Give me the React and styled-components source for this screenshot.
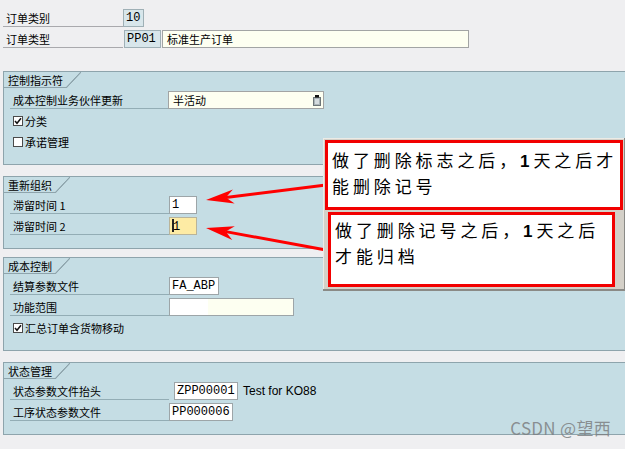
import React from 'react'
import styled, { createGlobalStyle, css } from 'styled-components'

const GlobalStyle = createGlobalStyle`
  html, body {
    margin: 0;
    padding: 0;
    background: #efeff1;
  }
  body {
    font-family: "Noto Sans CJK SC", "Liberation Sans", sans-serif;
    font-size: 11px;
    color: #000;
    overflow: hidden;
  }
`

const Screen = styled.div`
  position: relative;
  width: 625px;
  height: 449px;
  overflow: hidden;
`

const Header = styled.div`
  display: flex;
  flex-direction: column;
  gap: 3px;
  padding: 9px 0 0 3px;
`

const Row = styled.div`
  display: flex;
  align-items: stretch;
  height: 18px;
  gap: ${p => p.$gap || 0}px;
`

const HeadLabel = styled.div`
  width: 120px;
  box-sizing: border-box;
  padding-left: 3px;
  border-bottom: 1px solid #a9a9ad;
  display: flex;
  align-items: center;
`

const tones = {
  ro: css`background: #d8e6eb; border-color: #9fb0b6;`,
  white: css`background: #fff; border-color: #9da5a8;`,
  cream: css`background: #fdfff1; border-color: #a2a4a4;`,
  yellow: css`background: #fdeba4; border-color: #b9b49a;`,
  split: css`background: linear-gradient(to right, #fff 0 38px, #fdfff1 38px); border-color: #9da5a8;`
}

const Field = styled.div`
  box-sizing: border-box;
  width: ${p => p.$w}px;
  height: 18px;
  border: 1px solid;
  ${p => tones[p.$tone || 'white']}
  display: flex;
  align-items: center;
  justify-content: space-between;
  padding: 0 2px 0 ${p => (p.$mono ? 2 : 4)}px;
  white-space: nowrap;
  overflow: hidden;
  ${p => p.$mono && css`
    font-family: "Liberation Mono", monospace;
    font-size: 12px;
  `}
`

const Caret = styled.span`
  display: inline-block;
  width: 2px;
  height: 13px;
  background: #222;
  margin-right: -1px;
  vertical-align: -2px;
`

const Panel = styled.section`
  margin: ${p => p.$top}px 0 0 3px;
  background: #c5dde4;
  border: 1px solid #8ea4ac;
  border-right: none;
  padding-bottom: 13px;
`

const Tab = styled.div`
  display: flex;
  height: 16px;
`

const TabLabel = styled.div`
  box-sizing: border-box;
  height: 16px;
  padding: 0 3px 0 4px;
  border-bottom: 1px solid #8ea4ac;
  display: flex;
  align-items: center;
`

const TabSlant = styled.div`
  width: 15px;
  height: 16px;
  background: linear-gradient(
    to bottom right,
    transparent calc(50% - 0.9px),
    #8ea4ac calc(50% - 0.3px),
    #8ea4ac calc(50% + 0.3px),
    transparent calc(50% + 0.9px)
  );
`

const Body = styled.div`
  display: flex;
  flex-direction: column;
  gap: 3px;
  padding: 3px 0 0 6px;
`

const RowLabel = styled.div`
  width: ${p => p.$w || 159}px;
  box-sizing: border-box;
  padding-left: 3px;
  border-bottom: 1px solid #93adb5;
  display: flex;
  align-items: center;
`

const CheckRow = styled.div`
  display: flex;
  align-items: center;
  gap: 2px;
  height: 18px;
  padding-left: 3px;
`

const Box = styled.span`
  width: 10px;
  height: 10px;
  box-sizing: border-box;
  border: 1px solid #4a4a4a;
  background: #fff;
  display: flex;
  align-items: center;
  justify-content: center;
`

const Aside = styled.span`
  font-family: "Liberation Sans", sans-serif;
  font-size: 12px;
  align-self: center;
`

const Arrows = styled.svg`
  position: absolute;
  left: 0;
  top: 0;
  pointer-events: none;
`

const Callouts = styled.div`
  position: absolute;
  left: 323px;
  top: 138px;
  width: 302px;
  height: 153px;
  box-sizing: border-box;
  padding: 2px 0 0 2px;
  background: #d4d0c8;
  box-shadow: inset -1px -2px #8a8a86, inset 1px 1px #ecebe6;
  display: flex;
  flex-direction: column;
  gap: 2px;
`

const Note = styled.div`
  box-sizing: border-box;
  width: ${p => p.$w}px;
  height: ${p => p.$h}px;
  margin-left: ${p => p.$x}px;
  padding: ${p => p.$pad};
  border: 3px solid #f20000;
  background: #fff;
  font-size: 17px;
  letter-spacing: 3.9px;
  line-height: 24px;
  white-space: nowrap;
  overflow: hidden;
`

const One = styled.b`
  font-family: "Liberation Sans", sans-serif;
  font-weight: 700;
`

const Mark = styled.div`
  position: absolute;
  right: 14px;
  bottom: 9px;
  font-size: 17px;
  color: rgba(125, 128, 130, 0.85);
  letter-spacing: 0.3px;
`

const Tick = () => (
  <svg width="8" height="8" viewBox="0 0 8 8">
    <path d="M1 4 L3 6.3 L7 1.3" fill="none" stroke="#111" strokeWidth="1.5" />
  </svg>
)

const Check = ({ on, children }) => (
  <CheckRow>
    <Box>{on && <Tick />}</Box>
    {children}
  </CheckRow>
)

const ListIcon = () => (
  <svg width="8" height="11" viewBox="0 0 8 11">
    <rect x="0.5" y="2.5" width="7" height="8" fill="#aab4b8" stroke="#6d7679" />
    <rect x="2" y="4" width="4" height="5" fill="#d5dcdf" />
    <rect x="2" y="0" width="4" height="2.5" fill="#111" />
  </svg>
)

const GroupBox = ({ title, top, children }) => (
  <Panel $top={top}>
    <Tab>
      <TabLabel>{title}</TabLabel>
      <TabSlant />
    </Tab>
    <Body>{children}</Body>
  </Panel>
)

const arrowHead = (tip, tail) => {
  const dx = tip[0] - tail[0]
  const dy = tip[1] - tail[1]
  const len = Math.hypot(dx, dy)
  const ux = dx / len
  const uy = dy / len
  const base = [tip[0] - 28 * ux, tip[1] - 28 * uy]
  const notch = [tip[0] - 20 * ux, tip[1] - 20 * uy]
  const nx = -uy * 7
  const ny = ux * 7
  return {
    notch,
    points: [tip, [base[0] + nx, base[1] + ny], notch, [base[0] - nx, base[1] - ny]]
      .map(p => p.join(','))
      .join(' ')
  }
}

const Arrow = ({ tip, tail }) => {
  const { notch, points } = arrowHead(tip, tail)
  return (
    <g>
      <line x1={tail[0]} y1={tail[1]} x2={notch[0]} y2={notch[1]} stroke="#f00" strokeWidth="3" />
      <polygon points={points} fill="#f00" />
    </g>
  )
}

export default function App() {
  return (
    <Screen>
      <GlobalStyle />
      <Header>
        <Row>
          <HeadLabel>订单类别</HeadLabel>
          <Field $w={21} $tone="ro" $mono>10</Field>
        </Row>
        <Row $gap={1}>
          <HeadLabel>订单类型</HeadLabel>
          <Field $w={37} $tone="ro" $mono>PP01</Field>
          <Field $w={307} $tone="cream">标准生产订单</Field>
        </Row>
      </Header>

      <GroupBox title="控制指示符" top={23}>
        <Row>
          <RowLabel $w={158}>成本控制业务伙伴更新</RowLabel>
          <Field $w={156} $tone="cream">
            半活动
            <ListIcon />
          </Field>
        </Row>
        <Check on>分类</Check>
        <Check>承诺管理</Check>
      </GroupBox>

      <GroupBox title="重新组织" top={11}>
        <Row>
          <RowLabel>滞留时间 1</RowLabel>
          <Field $w={28} $mono>1</Field>
        </Row>
        <Row>
          <RowLabel>滞留时间 2</RowLabel>
          <Field $w={28} $tone="yellow" $mono>
            <span><Caret />1</span>
          </Field>
        </Row>
      </GroupBox>

      <GroupBox title="成本控制" top={8}>
        <Row>
          <RowLabel>结算参数文件</RowLabel>
          <Field $w={50} $mono>FA_ABP</Field>
        </Row>
        <Row>
          <RowLabel>功能范围</RowLabel>
          <Field $w={125} $tone="split" />
        </Row>
        <Check on>汇总订单含货物移动</Check>
      </GroupBox>

      <GroupBox title="状态管理" top={11}>
        <Row $gap={5}>
          <RowLabel>状态参数文件抬头</RowLabel>
          <Field $w={64} $mono>ZPP00001</Field>
          <Aside>Test for KO88</Aside>
        </Row>
        <Row>
          <RowLabel>工序状态参数文件</RowLabel>
          <Field $w={64} $mono>PP000006</Field>
        </Row>
      </GroupBox>

      <Arrows width="625" height="449">
        <Arrow tail={[326, 185]} tip={[206, 200]} />
        <Arrow tail={[326, 250]} tip={[206, 228]} />
      </Arrows>

      <Callouts>
        <Note $w={298} $h={70} $x={0} $pad="5px 0 0 4px">
          做了删除标志之后，<One>1</One>天之后才
          <br />
          能删除记号
        </Note>
        <Note $w={287} $h={75} $x={3} $pad="3px 0 0 4px">
          做了删除记号之后，<One>1</One>天之后
          <br />
          才能归档
        </Note>
      </Callouts>

      <Mark>CSDN @望西</Mark>
    </Screen>
  )
}
